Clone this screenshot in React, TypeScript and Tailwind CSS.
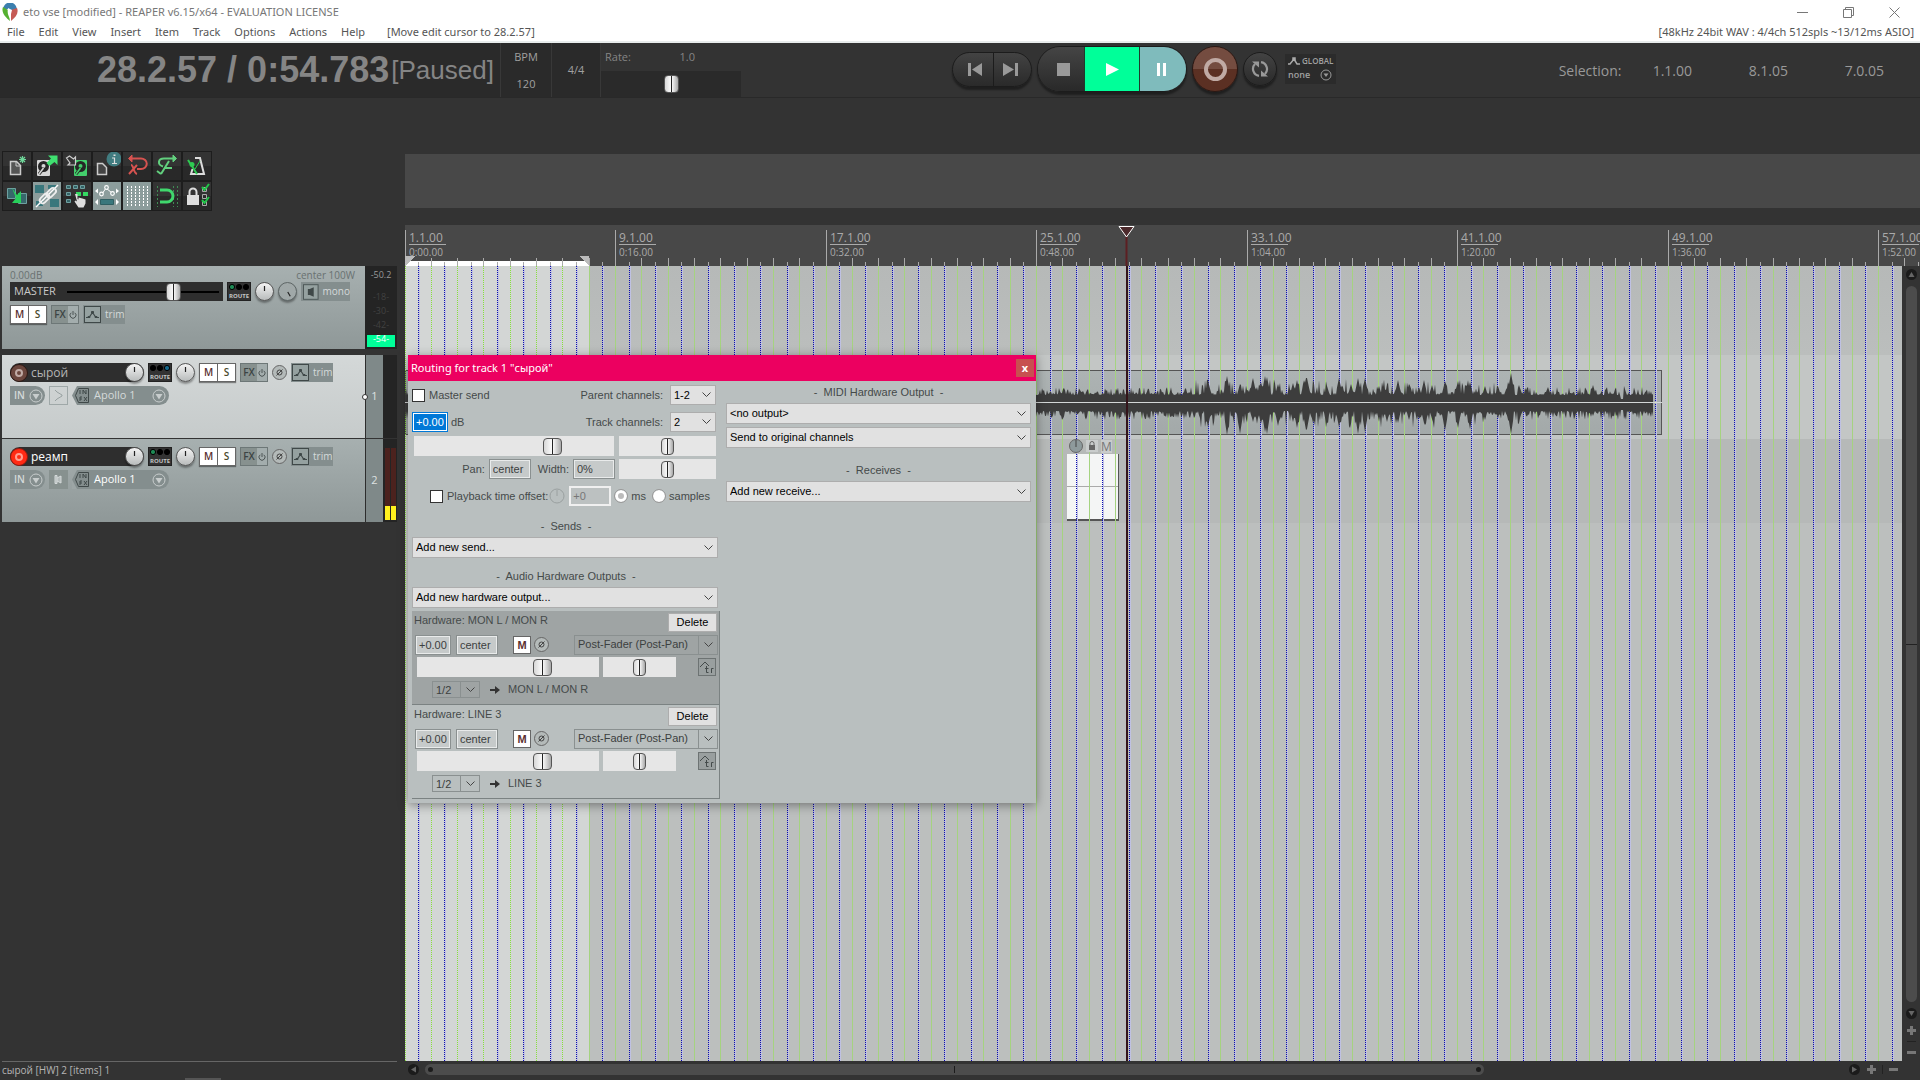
import React, { useMemo } from 'react';

const MENU = ['File', 'Edit', 'View', 'Insert', 'Item', 'Track', 'Options', 'Actions', 'Help'];

const MEASURES = [
  { bar: '1.1.00', time: '0:00.00' },
  { bar: '9.1.00', time: '0:16.00' },
  { bar: '17.1.00', time: '0:32.00' },
  { bar: '25.1.00', time: '0:48.00' },
  { bar: '33.1.00', time: '1:04.00' },
  { bar: '41.1.00', time: '1:20.00' },
  { bar: '49.1.00', time: '1:36.00' },
  { bar: '57.1.00', time: '1:52.00' },
];

const MEASURE_WIDTH = 210.5;
const BEAT_WIDTH = MEASURE_WIDTH / 8;
const BEATS = Array.from({ length: 58 }, (_, i) => i);

// loud hits in the recorded item: [x, height up, height down]
const PEAKS = [
  [803, 22, 25], [822, 26, 33], [835, 18, 32], [848, 24, 20], [856, 20, 22], [860, 26, 30], [862, 25, 32],
  [873, 18, 24], [888, 19, 20], [892, 22, 26], [901, 24, 28], [902, 24, 27], [922, 16, 20], [934, 24, 25],
  [946, 18, 16], [953, 24, 32], [960, 24, 30], [974, 16, 18], [982, 15, 20], [993, 22, 21], [1004, 18, 18],
  [1014, 15, 17], [1019, 22, 21], [1027, 17, 17], [1040, 21, 29], [1053, 21, 26], [1065, 20, 27],
  [1080, 16, 18], [1093, 16, 16], [1106, 29, 32], [1115, 14, 16], [1188, 17, 14], [1219, 16, 17],
];

const FADER_THUMB =
  'appearance-none cursor-pointer [&::-webkit-slider-thumb]:appearance-none [&::-webkit-slider-thumb]:rounded-sm [&::-webkit-slider-thumb]:border [&::-webkit-slider-thumb]:border-[#555] [&::-webkit-slider-thumb]:bg-[linear-gradient(90deg,#d8d8d8,#fafafa_45%,#222_46%,#222_54%,#f5f5f5_55%,#a8a8a8)]';
const WIDE_THUMB = '[&::-webkit-slider-thumb]:w-[19px] [&::-webkit-slider-thumb]:h-[17px]';
const THIN_THUMB = '[&::-webkit-slider-thumb]:w-[13px] [&::-webkit-slider-thumb]:h-[17px]';
const STRIP_THUMB = '[&::-webkit-slider-thumb]:w-[15px] [&::-webkit-slider-thumb]:h-[18px]';

/* ---------- toolbar icons ---------- */

const Disk = ({ color, x }: { color: string; x: number }) => (
  <g transform={`translate(${x} 8)`}>
    <rect width="13" height="16" rx="1" fill={color} />
    <circle cx="6.5" cy="6.5" r="5.5" fill="#262626" />
    <circle cx="6.5" cy="6" r="2" fill={color} />
    <path d="M7 8l-5 6" stroke="#262626" strokeWidth="3" />
    <path d="M6.500 8L2 14" stroke={color} strokeWidth="1.5" />
  </g>
);

const TOOLS = [
  {
    name: 'New project',
    art: (
      <g>
        <path d="M7.500 9.500h6l4 4v9h-10z" fill="#555" stroke="#ccc" strokeWidth="1.500" />
        <path d="M13 9.500v4.500h4.500" fill="none" stroke="#ccc" />
        <path d="M19.500 4v7M16 7.500h7M17 5l5 5M22 5l-5 5" stroke="#6fd79a" strokeWidth="1.200" />
      </g>
    ),
  },
  {
    name: 'Open project',
    art: (
      <g>
        <Disk color="#d6d6d6" x={4} />
        <path d="M15 3.500h9.500v9.500l-3-3-5 4-3-3 4.500-4.500z" fill="#3fe070" />
      </g>
    ),
  },
  {
    name: 'Save project',
    art: (
      <g>
        <Disk color="#43cf6c" x={11} />
        <path d="M3.500 6l3-2 4 3 2-2v8H5l2-2z" fill="#333" stroke="#ccc" strokeWidth="1.200" />
      </g>
    ),
  },
  {
    name: 'Project settings',
    art: (
      <g>
        <path d="M4.500 11.500h5l4 4v7h-9z" fill="#444" stroke="#ccc" strokeWidth="1.500" />
        <circle cx="21" cy="7" r="7.500" fill="#417c80" />
        <path d="M19 6h2.500v5.500M19 11.500h5" fill="none" stroke="#ddd" strokeWidth="1.200" />
        <path d="M20.500 2.500h2v1.500h-2z" fill="#ddd" />
      </g>
    ),
  },
  {
    name: 'Undo',
    art: (
      <g fill="none" stroke="#d65350" strokeWidth="2">
        <path d="M7 6.500h11a5.500 5 0 0 1 0 10.500h-4" />
        <path d="M9 3L5.500 6.500 9 10z" fill="#d65350" strokeWidth="1" />
        <path d="M6 22l8-9M8 13c3 0 2 8 6 9" />
      </g>
    ),
  },
  {
    name: 'Redo',
    art: (
      <g fill="none" stroke="#62d07e" strokeWidth="2">
        <path d="M21 6.500H11c-6 0-7 6-1 8M16 9l-8 13" />
        <path d="M20 3l3.500 3.500L20 10z" fill="#62d07e" strokeWidth="1" />
        <path d="M4 19l4 3M11 16h8" />
      </g>
    ),
  },
  {
    name: 'Metronome',
    art: (
      <g fill="none">
        <path d="M12 6h5l4 16H8l1.500-5" stroke="#ddd" strokeWidth="2" />
        <path d="M5 8l9 14" stroke="#2ecc52" strokeWidth="2" />
        <circle cx="9" cy="12.500" r="2.500" fill="#2ecc52" />
        <path d="M17 9l-5 8" stroke="#2ecc52" />
      </g>
    ),
  },
  {
    name: 'Auto-crossfade',
    art: (
      <g>
        <path d="M4.500 6.500h8v10h-8zM15.500 11.500h8v10h-8z" fill="#37686b" stroke="#6ea0a0" />
        <path d="M9 6l5 7 4-4v12h-9l4-5z" fill="#27d05a" />
      </g>
    ),
  },
  {
    name: 'Item grouping',
    active: true,
    art: (
      <g>
        <path d="M2 3h9v8H2zM17 17h9v8h-9zM15 3h8v4h-8zM3 19h7v5H3z" fill="#39777c" />
        <path d="M3 25L25 3" stroke="#fff" strokeWidth="1.500" />
        <g fill="none" stroke="#eee" strokeWidth="1.800">
          <rect x="10" y="11" width="11" height="6" rx="3" transform="rotate(-45 15 14) translate(4 0)" />
          <rect x="5" y="11" width="11" height="6" rx="3" transform="rotate(-45 14 14)" />
        </g>
      </g>
    ),
  },
  {
    name: 'Ripple editing',
    art: (
      <g>
        <path
          d="M3.500 3.500h4v3h-4zM10.500 3.500h4v3h-4zM17.500 3.500h4v3h-4zM3.500 10.500h4v3h-4zM3.500 17.500h4v3h-4z"
          fill="#356468"
          stroke="#6ea0a0"
        />
        <path d="M13 10h5v4h-5zM20 10h5v4h-5z" fill="#35d862" />
        <path d="M12 12h2.500v5l1 .5v-2l2 .5 2 .5 3 1v4l-2 4h-5l-4-6 1-1 1.500 1z" fill="#ddd" />
      </g>
    ),
  },
  {
    name: 'Move envelope points with items',
    active: true,
    art: (
      <g>
        <path d="M9 12l4-6 6 5" fill="none" stroke="#fff" />
        <g fill="#8c9d9c" stroke="#fff" strokeWidth="1.200">
          <circle cx="8.500" cy="12" r="1.800" />
          <circle cx="13.500" cy="5.500" r="1.800" />
          <circle cx="19.500" cy="11.500" r="1.800" />
        </g>
        <path d="M5 6.500v5L2 9zM23 6.500v5l3-2.500zM5 17v6l-3-3zM23 17v6l3-3z" fill="#fff" />
        <path d="M7.500 17.500h13v5h-13z" fill="#39777c" stroke="#2f5f62" />
      </g>
    ),
  },
  {
    name: 'Grid lines',
    active: true,
    art: <path d="M4.500 4v21M8.500 4v21M12.500 4v21M16.500 4v21M20.500 4v21M24.500 4v21" stroke="#fff" strokeDasharray="2 1" />,
  },
  {
    name: 'Snap to grid',
    art: (
      <g fill="none">
        <path d="M4.500 4v21M20.500 4v21M24.500 4v21" stroke="#3f8b54" strokeDasharray="2 2" />
        <path d="M7 8h7a5.500 5.500 0 0 1 0 12H7" stroke="#40d86d" strokeWidth="3" />
      </g>
    ),
  },
  {
    name: 'Locking',
    art: (
      <g fill="none">
        <path d="M4 13h12v10H4z" fill="#ddd" />
        <path d="M6.500 13v-3a3.500 3.500 0 0 1 7 0v3" stroke="#ddd" strokeWidth="2" />
        <path d="M19.500 5.500h4v4h-4zM19.500 12.500h4v4h-4zM19.500 19.500h4v4h-4z" stroke="#aaa" />
        <path d="M19 5l2.500 3L26 2M19 18l2.500 3 4.500-6" stroke="#21c648" strokeWidth="2" />
      </g>
    ),
  },
];

/* ---------- small shared controls ---------- */

interface SelectProps {
  label: string;
  value: string;
  className: string;
  flat?: boolean;
  id?: string;
}

const Select: React.FC<SelectProps> = ({ label, value, className, flat, id }) => (
  <div className={`relative ${className}`}>
    <select
      id={id}
      aria-label={label}
      className={`w-full h-full pl-[3px] pr-5 appearance-none border outline-none ${
        flat ? 'bg-transparent border-[#8a9090] text-[#3c4040]' : 'bg-[#e1e1e1] border-[#adadad] text-black'
      }`}
    >
      <option>{value}</option>
    </select>
    <span
      className={`absolute right-0 top-0 h-full w-5 flex items-center justify-center pointer-events-none ${
        flat ? 'border-l border-[#8a9090]' : ''
      }`}
    >
      <svg width="9" height="6" viewBox="0 0 9 6" fill="none" stroke="#444">
        <path d="M.5 .5l4 4 4-4" />
      </svg>
    </span>
  </div>
);

interface SliderProps {
  label: string;
  value: number;
  className: string;
}

const Slider: React.FC<SliderProps> = ({ label, value, className }) => (
  <input type="range" aria-label={label} min={0} max={1000} defaultValue={value} className={`${FADER_THUMB} ${className}`} />
);

const Knob = ({ angle = 0, dim = false, label }: { angle?: number; dim?: boolean; label: string }) => (
  <button
    aria-label={label}
    className={`size-[19px] shrink-0 rounded-full border shadow-[0_2px_2px_rgba(0,0,0,0.35)] ${
      dim ? 'bg-[#a0a8a8] border-[#5e6666]' : 'bg-linear-to-b from-[#f4f4f4] to-[#b9bcbc] border-[#555]'
    }`}
  >
    <svg viewBox="0 0 17 17" className="block size-[17px]">
      <path d="M8.500 3v5" stroke="#222" strokeWidth="1.200" transform={`rotate(${angle} 8.500 8.500)`} />
    </svg>
  </button>
);

const Route = ({ lights }: { lights: string[] }) => (
  <button className="w-6 h-[19px] shrink-0 bg-[#333] border border-[#222] flex flex-col items-center justify-between text-[6px] leading-[8px] font-bold text-[#c4c4c4]">
    <svg viewBox="0 0 22 8" className="block w-[22px] h-2">
      {lights.map((color, i) => (
        <circle key={i} cx={4 + i * 7} cy="4" r="2.600" fill={color} stroke="#000" />
      ))}
    </svg>
    ROUTE
  </button>
);

const MuteSolo = () => (
  <div className="flex shrink-0 h-[19px] w-[37px] border border-[#666] bg-white text-[10px] leading-[17px] font-semibold text-[#3a3a3a] shadow-[0_1px_1px_rgba(0,0,0,0.4)]">
    <button className="flex-1 border-r border-[#666] text-[#5a3030]">M</button>
    <button className="flex-1 text-[#4a4a2c]">S</button>
  </div>
);

const Fx = () => (
  <div className="flex shrink-0 h-[19px] w-7 border border-[#6d7777] text-[10px] leading-[17px] font-semibold text-[#3c4444]">
    <button className="w-4 bg-[#87918f]">FX</button>
    <button aria-label="Bypass effects" className="flex-1 bg-[#a3adad] flex items-center justify-center">
      <svg width="8" height="8" viewBox="0 0 8 8" fill="none" stroke="#4c5454">
        <path d="M2.200 1.800a3 3 0 1 0 3.600 0M4 0v4" />
      </svg>
    </button>
  </div>
);

const Trim = () => (
  <button className="flex shrink-0 h-[19px] w-[42px] items-center bg-[#848e8e] pl-px text-[10px] text-[#d5dada]">
    <svg width="17" height="17" viewBox="0 0 17 17" fill="none" stroke="#3f4848" className="mr-1">
      <rect x=".5" y=".5" width="16" height="16" fill="#95a1a0" />
      <path d="M2 11.500h3l3.500-5 3.500 5h3" strokeWidth="1.200" />
      <path d="M7.500 5.500h2v1.500h-2zM4 10.500h2v1H4zM11 10.500h2v1h-2z" fill="#3f4848" />
    </svg>
    trim
  </button>
);

const Phase = () => (
  <button aria-label="Invert phase" className="size-[15px] shrink-0 rounded-full border border-[#666] bg-[#b4bab9]">
    <svg viewBox="0 0 13 13" className="block size-[13px]" fill="none" stroke="#444">
      <circle cx="6.500" cy="6.500" r="2.500" />
      <path d="M3.500 9.500l6-6" />
    </svg>
  </button>
);

const DropArrow = () => (
  <svg width="14" height="14" viewBox="0 0 14 14" className="shrink-0">
    <circle cx="7" cy="7" r="6" fill="none" stroke="#c8cdcd" />
    <path d="M3.500 5h7L7 10.500z" fill="#c8cdcd" />
  </svg>
);

/* ---------- header ---------- */

const TitleBar = () => (
  <header className="bg-white border-b-2 border-[#e8ecec] h-[43px] shrink-0 flex flex-col text-[11px] font-['Noto_Sans',sans-serif]">
    <div className="h-6 flex items-center text-[#777]">
      <svg width="16" height="18" viewBox="0 0 16 18" className="ml-0.5 mr-[5px]">
        <path d="M1 7a7 7 0 0 1 14-1L10 9 7 6z" fill="#3c7fae" />
        <path d="M1 4l5 3 2 11C3 14 -1 9 1 4z" fill="#55b030" />
        <path d="M9 7l6-2c2 5-1 9-6 13z" fill="#c65a55" />
        <path d="M6 5l4 2-2 8c-2-2-3-6-2-10z" fill="#fff" />
      </svg>
      eto vse [modified] - REAPER v6.15/x64 - EVALUATION LICENSE
      <div className="ml-auto flex items-center gap-[35px] pr-5 text-[#777]">
        <button aria-label="Minimize">
          <svg width="11" height="11" viewBox="0 0 11 11" stroke="currentColor">
            <path d="M0 5.500h11" />
          </svg>
        </button>
        <button aria-label="Restore">
          <svg width="11" height="11" viewBox="0 0 11 11" fill="none" stroke="currentColor">
            <path d="M.5 2.500h8v8h-8zM2.500 2.500v-2h8v8h-2" />
          </svg>
        </button>
        <button aria-label="Close">
          <svg width="11" height="11" viewBox="0 0 11 11" stroke="currentColor">
            <path d="M.5 .5l10 10M10.500 .5l-10 10" />
          </svg>
        </button>
      </div>
    </div>
    <nav className="h-[17px] flex items-center pl-[7px] gap-[14px] text-[#555]">
      {MENU.map(item => (
        <button key={item}>{item}</button>
      ))}
      <span className="ml-2">[Move edit cursor to 28.2.57]</span>
      <span className="ml-auto pr-1.5">[48kHz 24bit WAV : 4/4ch 512spls ~13/12ms ASIO]</span>
    </nav>
  </header>
);

const Transport = () => (
  <section className="h-[55px] shrink-0 flex border-b border-[#292929] text-[11px] text-[#a0a0a0]">
    <div className="w-[500px] pl-[97px] bg-[#2a2a2a] flex items-center text-[#858585] font-['Liberation_Sans',sans-serif] whitespace-nowrap">
      <span className="text-[36px] font-bold">28.2.57 / 0:54.783</span>
      <span className="text-[26px] pl-0.5">[Paused]</span>
    </div>
    <div className="w-[51px] bg-[#2a2a2a] border-l border-[#383838] flex flex-col items-center justify-between pt-1.5 pb-[5px]">
      <span>BPM</span>
      <span>120</span>
    </div>
    <div className="w-[49px] bg-[#2a2a2a] border-l border-[#383838] flex items-center justify-center">4/4</div>
    <div className="w-[141px] flex flex-col justify-between border-l border-[#383838]">
      <div className="flex justify-between pl-1 pr-[46px] pt-1.5 text-[#858585]">
        <label htmlFor="rate">Rate:</label>
        <span>1.0</span>
      </div>
      <input
        id="rate"
        type="range"
        defaultValue={50}
        className={`w-full h-[26px] bg-[#2a2a2a] ${FADER_THUMB} ${STRIP_THUMB}`}
      />
    </div>

    <div className="ml-[211px] flex items-center pb-1.5">
      <div className="flex h-[35px] w-20 mt-1 rounded-full border border-[#1c1c1c] bg-linear-to-b from-[#434343] to-[#2a2a2a] shadow-[0_3px_2px_rgba(0,0,0,0.4)]">
        <button aria-label="Go to start" className="flex-1 flex items-center justify-center border-r border-[#1c1c1c] pl-1.5">
          <svg width="15" height="13" viewBox="0 0 15 13" fill="#999">
            <path d="M0 0h3v13H0zM14 0v13L4 6.500z" />
          </svg>
        </button>
        <button aria-label="Go to end" className="flex-1 flex items-center justify-center pr-1">
          <svg width="15" height="13" viewBox="0 0 15 13" fill="#999">
            <path d="M12 0h3v13h-3zM0 0v13l11-6.500z" />
          </svg>
        </button>
      </div>
      <div className="ml-[5px] mt-1 flex h-[46px] w-[150px] rounded-full border border-[#1c1c1c] overflow-hidden shadow-[0_3px_2px_rgba(0,0,0,0.4)]">
        <button aria-label="Stop" className="w-[46px] bg-linear-to-b from-[#454545] to-[#292929] flex items-center justify-center pl-1">
          <span className="size-[13px] bg-[#999]" />
        </button>
        <button aria-label="Play" className="w-[56px] bg-[#00ff99] border-x border-[#1c3c2c] flex items-center justify-center">
          <svg width="13" height="13" viewBox="0 0 13 13" fill="#fff">
            <path d="M0 0v13l13-6.500z" />
          </svg>
        </button>
        <button aria-label="Pause" className="flex-1 bg-[#7fbbbc] flex items-center justify-center gap-[3px] pr-1">
          <span className="w-[3px] h-[13px] bg-white" />
          <span className="w-[3px] h-[13px] bg-white" />
        </button>
      </div>
      <button
        aria-label="Record"
        className="ml-[5px] mt-1 size-[46px] rounded-full border border-[#2b1712] bg-linear-to-b from-[#744c40] from-50% to-[#5b3023] to-50% flex items-center justify-center shadow-[0_3px_2px_rgba(0,0,0,0.4)]"
      >
        <span className="size-[23px] rounded-full border-4 border-[#c0aaa4]" />
      </button>
      <button
        aria-label="Repeat"
        className="ml-[5px] mt-1 size-[34px] rounded-full border border-[#1c1c1c] bg-linear-to-b from-[#434343] to-[#2a2a2a] flex items-center justify-center shadow-[0_3px_2px_rgba(0,0,0,0.4)]"
      >
        <svg width="18" height="18" viewBox="0 0 18 18" fill="none" stroke="#999" strokeWidth="2.200">
          <path d="M8 15.800A7 7 0 0 1 4 4M10 2.200A7 7 0 0 1 14 14" />
          <path d="M1 1.500h7v6zM17 16.500h-7v-6z" fill="#999" stroke="none" />
        </svg>
      </button>
      <div className="ml-2 mt-1 w-[51px] h-[30px] bg-[#2b2b2b] text-[9px] leading-[14px] font-semibold pl-[3px]">
        <button className="flex items-center gap-0.5">
          <svg width="12" height="8" viewBox="0 0 12 8" fill="none" stroke="#aaa" strokeWidth="1.500">
            <path d="M0 7h2l4-5 3 5h3" />
            <path d="M5 1h2v2H5z" fill="#aaa" />
          </svg>
          <span className="text-[8px]">GLOBAL</span>
        </button>
        <button className="flex items-center justify-between w-11">
          none
          <svg width="12" height="12" viewBox="0 0 12 12">
            <circle cx="6" cy="6" r="5" fill="none" stroke="#999" />
            <path d="M3.500 4.500h5L6 8z" fill="#999" />
          </svg>
        </button>
      </div>
    </div>

    <div className="ml-auto mr-9 flex items-center text-[14px] text-[#999]">
      <span className="w-[94px]">Selection:</span>
      <span className="w-24">1.1.00</span>
      <span className="w-24">8.1.05</span>
      <span>7.0.05</span>
    </div>
  </section>
);

/* ---------- track control panel ---------- */

const Toolbar = () => (
  <div className="ml-0.5 w-[210px] grid grid-cols-7">
    {TOOLS.map(tool => (
      <button
        key={tool.name}
        title={tool.name}
        className={`h-[30px] border border-[#1d1d1d] ${tool.active ? 'bg-[#8c9d9c]' : 'bg-linear-to-b from-[#333] from-50% to-[#292929] to-50%'}`}
      >
        <svg viewBox="0 0 28 28" className="block size-7">
          {tool.art}
        </svg>
      </button>
    ))}
  </div>
);

const MasterTrack = () => (
  <div className="ml-0.5 mr-2 h-[83px] flex">
    <div className="flex-1 bg-linear-to-b from-[#a7b0b0] to-[#8f9898] pl-2 pt-0.5">
      <div className="flex justify-between pr-2.5 text-[10px] leading-[14px] text-[#697171]">
        <span>0.00dB</span>
        <span>center 100W</span>
      </div>
      <div className="flex gap-1">
        <div className="w-[213px] h-[19px] bg-[#2e2e2e] pl-1 pr-1 flex items-center text-[11px] text-[#c9c9c9]">
          <span className="w-[53px]">MASTER</span>
          <Slider
            label="Master volume"
            value={723}
            className={`w-[152px] h-[18px] bg-[linear-gradient(transparent_8px,#000_8px,#000_10px,transparent_10px)] ${STRIP_THUMB}`}
          />
        </div>
        <Route lights={['#1e8a55', '#000', '#000']} />
        <Knob label="Pan" />
        <Knob label="Width" angle={150} dim />
        <button className="w-[49px] h-[19px] bg-[#848e8e] flex items-center pl-0.5 text-[10px] text-[#d5dada]">
          <svg width="16" height="16" viewBox="0 0 16 16" className="mr-1">
            <rect x=".5" y=".5" width="15" height="15" fill="#95a1a0" stroke="#4c5656" />
            <path d="M5 5h2l4-2v10l-4-2H5z" fill="#3f4848" />
          </svg>
          mono
        </button>
      </div>
      <div className="flex gap-1 mt-1">
        <MuteSolo />
        <Fx />
        <Trim />
      </div>
    </div>
    <div className="w-8 bg-[#242424] flex flex-col items-center text-[9px] leading-[14px] text-[#414141]">
      <span className="text-[#999] pt-0.5">-50.2</span>
      <span className="mt-2">-18-</span>
      <span>-30-</span>
      <span>-42-</span>
      <div className="mt-auto mb-0.5 w-7 h-3 bg-[#00ff99] text-white text-center leading-[7px]">-54-</div>
    </div>
  </div>
);

interface TrackProps {
  number: number;
  name: string;
  armed?: boolean;
  selected?: boolean;
  lights: string[];
}

const TrackPanel: React.FC<TrackProps> = ({ number, name, armed, selected, lights }) => (
  <div className="ml-0.5 mr-2 h-[83px] flex">
    <div
      className={`relative flex-1 pl-2 pt-2 bg-linear-to-b ${selected ? 'from-[#d4d8d8] to-[#c6cbcb]' : 'from-[#a7b0b0] to-[#8f9898]'}`}
    >
      <div className="flex items-center gap-1">
        <div className="w-[134px] h-[19px] bg-[#2e2e2e] rounded-full flex items-center">
          <button
            aria-label="Record arm"
            className={`size-[18px] rounded-full border flex items-center justify-center ${armed ? 'bg-[#ff2a14] border-[#8f1a10]' : 'bg-[#6b463d] border-[#2b1712]'}`}
          >
            <span className={`size-2 rounded-full border-2 ${armed ? 'border-[#ff9d90]' : 'border-[#c0aaa4]'}`} />
          </button>
          <span className={`ml-[3px] flex-1 text-[12px] ${armed ? 'text-white' : 'text-[#b5b5b5]'}`}>{name}</span>
          <Knob label="Volume" />
        </div>
        <Route lights={lights} />
        <Knob label="Pan" />
        <MuteSolo />
        <Fx />
        <Phase />
        <Trim />
      </div>
      <div className="flex items-center mt-1 text-[11px] text-[#d5dada]">
        <button className="w-[35px] h-[19px] rounded-r-full bg-[#848e8e] flex items-center justify-between pl-1 pr-0.5 text-[10px] font-semibold">
          IN <DropArrow />
        </button>
        <button
          aria-label="Record monitoring"
          className={`ml-1 w-[19px] h-[19px] flex items-center justify-center ${armed ? 'bg-[#87918f]' : 'border border-[#9fa8a8]'}`}
        >
          <svg width="13" height="13" viewBox="0 0 13 13" fill="none" stroke={armed ? '#d5dada' : '#98a1a1'}>
            {armed ? <path d="M3 2.500h2v8H3zM5 5l4-2v7L5 8" fill="#b5bcbc" /> : <path d="M3 1l2 2 5 3v1l-5 3-2 2" />}
          </svg>
        </button>
        <button className="ml-1 w-[97px] h-[19px] rounded-r-full bg-[#848e8e] flex items-center pr-0.5">
          <svg width="18" height="19" viewBox="0 0 18 19" fill="none" stroke="#3f4848">
            <path d="M0 0h5L0 9.500zM0 19h5L0 9.500z" fill={selected ? '#ced2d2' : '#9da6a6'} stroke="none" />
            <path d="M6.500 2.500h10v14h-10l-3-7z" />
            <path d="M8 4v4M11 8V4l3 4V4" />
            <path d="M8 15v-4h2M8 13h2M12 11l3 4M15 11l-3 4" />
          </svg>
          <span className={`ml-1 flex-1 text-left ${armed ? 'text-white' : ''}`}>Apollo 1</span>
          <span className="mr-px">
            <DropArrow />
          </span>
        </button>
      </div>
      {selected && <span className="absolute -right-[3px] top-[39px] size-[6px] rounded-full border border-[#333] bg-white" />}
    </div>
    <div className="w-[18px] bg-[#7f8989] border-l border-[#2d2d2d] flex items-center justify-center text-[11px] text-[#dde1e1]">
      {number}
    </div>
    <div className="w-[14px] bg-[#242424] flex items-end justify-center gap-px">
      {armed &&
        [0, 1].map(channel => (
          <div key={channel} className="w-[5px] h-[72px] mb-0.5 bg-[#4c221e] flex items-end">
            <div className="w-full h-[14px] bg-[#fff01e]" />
          </div>
        ))}
    </div>
  </div>
);

const Sidebar = () => (
  <aside className="w-[405px] shrink-0 flex flex-col pt-[53px] bg-[#333]">
    <Toolbar />
    <div className="mt-[55px]">
      <MasterTrack />
    </div>
    <div className="mt-1.5 flex flex-col gap-px">
      <TrackPanel number={1} name="сырой" selected lights={['#000', '#000', '#15678a']} />
      <TrackPanel number={2} name="реамп" armed lights={['#1e8a55', '#000', '#000']} />
    </div>
    <footer className="mt-auto ml-0.5 mr-2 h-[19px] border-t border-[#666] text-[10px] leading-4 text-[#b5b5b5]">
      сырой [HW] 2 [items] 1
      <div className="ml-[183px] w-9 h-0.5 bg-[#555]" />
    </footer>
  </aside>
);

/* ---------- arrange view ---------- */

const Ruler = () => (
  <div className="relative h-[41px] shrink-0 bg-[#484848] overflow-hidden text-[#aaa]">
    <div className="absolute left-0 bottom-0 w-[184px] h-[5px] bg-white" />
    <svg className="absolute inset-0 size-full" shapeRendering="crispEdges">
      {BEATS.map(i => {
        const x = Math.floor(i * BEAT_WIDTH);
        return (
          <g key={i} fill="#aaa">
            <rect x={x} y={i % 8 === 0 ? 5 : 33} width="1" height="36" />
            <rect x={Math.round((i + 0.5) * BEAT_WIDTH)} y="37" width="1" height="4" />
          </g>
        );
      })}
      <path d="M0 31h10L0 41zM184 31h-10l10 10z" fill="#bbb" />
    </svg>
    {MEASURES.map((m, i) => (
      <div key={m.bar} className="absolute top-1.5 ml-1" style={{ left: Math.floor(i * MEASURE_WIDTH) }}>
        <div className="w-[37px] border-b border-[#aaa] text-[12px] leading-[13px]">{m.bar}</div>
        <div className="text-[10px] leading-[14px]">{m.time}</div>
      </div>
    ))}
    <svg className="absolute left-[713px] top-px" width="17" height="40" viewBox="0 0 17 40">
      <path d="M8.500 10v30" stroke="#5c1f22" strokeWidth="2" />
      <path d="M1 .5h15L8.500 11z" fill="#4c2a2c" stroke="#fff" />
    </svg>
  </div>
);

const Waveform = () => {
  const path = useMemo(() => {
    const noise = (n: number) => Math.abs(Math.sin(n * 12.9898) * 43758.5453) % 1;
    const top: string[] = [];
    const bottom: string[] = [];
    for (let x = 0; x <= 1248; x++) {
      const loud = x > 790 && x < 1120 ? 8 : 0;
      const up1 = noise(x);
      const down1 = noise(x + 999);
      let up = 7 + up1 * up1 * 8 + up1 ** 5 * loud;
      let down = 9 + down1 * down1 * 9 + down1 ** 5 * loud;
      PEAKS.forEach(([px, pu, pd]) => {
        const d = Math.abs(px - x);
        if (d < 3) {
          up = Math.max(up, pu * (1 - d / 5));
          down = Math.max(down, pd * (1 - d / 5));
        }
      });
      if (Math.abs(x - 1217) < 2) {
        up = 3;
        down = 8;
      }
      top.push(`${x} ${(32 - up).toFixed(1)}`);
      bottom.unshift(`${x} ${(32 + down).toFixed(1)}`);
    }
    return `M${top.join('L')}L${bottom.join('L')}Z`;
  }, []);

  return (
    <svg className="absolute left-0 top-[104px] w-[1257px] h-[65px]">
      <path d={path} fill="#3d3d3d" />
      <path d="M0 32.500h1257" stroke="#d3d7d7" />
    </svg>
  );
};

const GridLines = () => (
  <svg className="absolute inset-0 size-full" shapeRendering="crispEdges">
    {BEATS.map(i => {
      const green = Math.floor(i * BEAT_WIDTH);
      const blue = Math.round((i + 0.5) * BEAT_WIDTH);
      return (
        <g key={i}>
          {green < 184 ? (
            <path d={`M${green + 0.5} 0V1200`} stroke="#86e03c" strokeDasharray="1 1" />
          ) : (
            <path d={`M${green + 0.5} 0V1200`} stroke="#a5d380" />
          )}
          <path d={`M${blue + 1.5} 0V1200`} stroke="#bfc1e2" />
          <path d={`M${blue + 0.5} 0V1200`} stroke="#0a0ab4" strokeDasharray="1 1" />
        </g>
      );
    })}
  </svg>
);

const Arrange = () => (
  <div className="relative flex-1 overflow-hidden bg-[#bcbfbe]">
    <div className="h-[89px] bg-linear-to-b from-[#b6b9b8] to-[#bbbebd]" />
    <div className="h-[84px] bg-[#c3c6c5]" />
    <div className="h-[84px] bg-[#b6b9b8]" />
    <div className="absolute left-0 top-0 w-[184px] h-full bg-[#d3d6d5]" />
    <div className="absolute left-0 top-[104px] w-[1257px] h-[65px] bg-linear-to-b from-[#adb3b3] to-[#a3a9a9] border border-[#555]" />
    <div className="absolute left-[662px] top-[188px] w-[52px] h-[67px] bg-[#f4f5f5] border-r border-b-2 border-[#555]">
      <div className="mt-8 h-px bg-[#aaa]" />
    </div>
    <GridLines />
    <Waveform />
    <div className="absolute left-[664px] top-[173px] flex items-center gap-[3px] text-[12px] leading-[13px] text-[#777]">
      <svg width="14" height="14" viewBox="0 0 14 14">
        <circle cx="7" cy="7" r="6.500" fill="#8e9a9c" stroke="#666" />
        <path d="M7 1v7" stroke="#444" />
      </svg>
      <svg width="12" height="12" viewBox="0 0 12 12">
        <rect width="12" height="12" fill="#c9cccc" />
        <path d="M3 5h6v5H3z" fill="#666" />
        <path d="M4 5V3.500a2 2 0 0 1 4 0V5" fill="none" stroke="#666" />
      </svg>
      <span className="bg-[#c9cccc]">M</span>
    </div>
    <div className="absolute left-[721px] top-0 w-0.5 h-full bg-[#33141a]" />
  </div>
);

const ScrollButton = ({ rotate, label }: { rotate: number; label: string }) => (
  <button aria-label={label} className="size-[11px] shrink-0 rounded-full bg-[#1b1b1b] flex items-center justify-center">
    <svg width="7" height="7" viewBox="0 0 7 7">
      <path d="M3.500 1l3 5h-6z" fill="#666" transform={`rotate(${rotate} 3.500 3.500)`} />
    </svg>
  </button>
);

const ZoomGlyph = ({ plus }: { plus?: boolean }) => (
  <button aria-label={plus ? 'Zoom in' : 'Zoom out'} className="shrink-0">
    <svg width="9" height="9" viewBox="0 0 9 9" className="block">
      <path d={plus ? 'M3 0h3v3h3v3H6v3H3V6H0V3h3z' : 'M0 3h9v3H0z'} fill="#777" />
    </svg>
  </button>
);

const ArrangePane = () => (
  <main className="flex-1 min-w-0 flex flex-col">
    <div className="mt-14 h-[54px] shrink-0 bg-[#484848]" />
    <div className="mt-[17px] shrink-0">
      <Ruler />
    </div>
    <div className="flex-1 min-h-0 flex">
      <Arrange />
      <div className="w-[18px] flex flex-col items-center pt-[3px] pb-1">
        <ScrollButton label="Scroll up" rotate={0} />
        <div className="mt-1.5 mb-1.5 w-[11px] flex-1 rounded-full bg-[#4c4c4c] flex items-center">
          <span className="w-full h-px bg-[#222]" />
        </div>
        <ScrollButton label="Scroll down" rotate={180} />
        <div className="mt-[7px] flex flex-col items-center gap-1.5">
          <ZoomGlyph plus />
          <span className="w-[9px] h-px bg-[#222]" />
          <ZoomGlyph />
        </div>
      </div>
    </div>
    <div className="h-[19px] shrink-0 flex items-center pl-[3px] pr-[22px] pb-[3px]">
      <ScrollButton label="Scroll left" rotate={270} />
      <div className="flex-1 ml-1.5 mr-3">
        <div className="w-3/4 h-[11px] rounded-full bg-[#4c4c4c] flex items-center justify-between px-[3px]">
          <span className="size-[5px] rounded-full bg-[#1b1b1b]" />
          <span className="w-px h-[7px] bg-[#1b1b1b]" />
          <span className="size-[5px] rounded-full bg-[#1b1b1b]" />
        </div>
      </div>
      <ScrollButton label="Scroll right" rotate={90} />
      <div className="ml-[7px] flex items-center gap-1.5">
        <ZoomGlyph plus />
        <span className="w-px h-[9px] bg-[#222]" />
        <ZoomGlyph />
      </div>
    </div>
  </main>
);

/* ---------- routing window ---------- */

const FIELD = 'bg-[#c6caca] border-2 border-[#e9ebeb] outline outline-[#8a9090] -outline-offset-1 px-0.5 text-[#3c4040]';

const HardwareOutput = ({ name, active }: { name: string; active?: boolean }) => (
  <section className={`h-[94px] pt-0.5 border-b border-r border-[#7b8282] ${active ? 'bg-[#9fa4a4]' : ''}`}>
    <div className="h-[19px] flex justify-between pl-0.5 pr-0.5">
      <span className="leading-[15px]">Hardware: {name}</span>
      <button className="w-[49px] h-[19px] bg-[#e1e1e1] border border-[#adadad] text-black">Delete</button>
    </div>
    <div className="mt-0.5 h-[21px] flex items-center pl-[3px] pr-px">
      <input aria-label={`${name} volume`} defaultValue="+0.00" className={`w-9 h-5 ${FIELD}`} />
      <input aria-label={`${name} pan`} defaultValue="center" className={`ml-[5px] w-[42px] h-5 ${FIELD}`} />
      <button className="ml-[15px] w-[18px] h-[18px] bg-white border border-[#666] text-[#5a3030] leading-4 font-bold">M</button>
      <span className="ml-[3px] flex">
        <Phase />
      </span>
      <Select label={`${name} send mode`} value="Post-Fader (Post-Pan)" flat className="ml-auto w-[144px] h-5" />
    </div>
    <div className="mt-0.5 h-5 flex items-center pl-[5px] pr-[3px]">
      <Slider label={`${name} volume fader`} value={712} className={`w-[182px] h-5 bg-[#e6e6e6] ${WIDE_THUMB}`} />
      <Slider label={`${name} pan fader`} value={500} className={`ml-1 w-[73px] h-5 bg-[#e6e6e6] ${THIN_THUMB}`} />
      <button aria-label="Envelopes" className="ml-auto w-[18px] h-[18px] border border-[#6d7373] bg-[#999f9f]">
        <svg viewBox="0 0 16 16" className="block size-4" fill="none" stroke="#444b4b">
          <path d="M1 8l5-5 4 4" />
          <path d="M7.500 7v6.500h2M6 9.500h3.500M12.500 14V9.500h2" />
        </svg>
      </button>
    </div>
    <div className="mt-1 h-[17px] flex items-center pl-5">
      <Select label={`${name} source channels`} value="1/2" flat className="w-12 h-[17px]" />
      <svg width="10" height="8" viewBox="0 0 10 8" className="ml-2.5 mr-2">
        <path d="M0 3h5V0l5 4-5 4V5H0z" fill="#333" />
      </svg>
      {name}
    </div>
  </section>
);

const RoutingDialog = () => (
  <div
    role="dialog"
    aria-label="Routing for track 1"
    className="absolute left-[408px] top-[355px] w-[628px] h-[448px] flex flex-col bg-[#b9bfbf] shadow-[0_2px_10px_rgba(0,0,0,0.4)] font-['Liberation_Sans',sans-serif] text-[11px] text-[#454a4a]"
  >
    <div className="h-[26px] shrink-0 bg-[#ec0060] flex items-center justify-between pl-[3px] pr-0.5 text-white font-['Noto_Sans',sans-serif]">
      Routing for track 1 "сырой"
      <button className="w-[18px] h-[18px] bg-[#c75050] text-[11px] leading-4 font-bold">x</button>
    </div>
    <div className="flex pl-1 pr-[5px] gap-1.5">
      <div className="w-[308px] pt-1">
        <div className="h-5 flex items-center pr-1">
          <label className="flex items-center gap-1">
            <input type="checkbox" className="size-[13px] appearance-none bg-white border border-[#333]" />
            Master send
          </label>
          <label htmlFor="parent-channels" className="ml-auto mr-[7px]">
            Parent channels:
          </label>
          <Select id="parent-channels" label="Parent channels" value="1-2" className="w-[46px] h-5" />
        </div>
        <div className="mt-[7px] h-5 flex items-center pr-1">
          <input
            id="send-volume"
            defaultValue="+0.00"
            className="w-9 h-5 px-0.5 border-2 border-[#0078d7] bg-[#0078d7] text-white outline outline-white -outline-offset-2"
          />
          <label htmlFor="send-volume" className="ml-[3px]">
            dB
          </label>
          <label htmlFor="track-channels" className="ml-auto mr-[7px]">
            Track channels:
          </label>
          <Select id="track-channels" label="Track channels" value="2" className="w-[46px] h-5" />
        </div>
        <div className="mt-1 h-5 flex justify-between pl-0.5 pr-1">
          <Slider label="Volume" value={713} className={`w-[200px] h-5 bg-[#e6e6e6] ${WIDE_THUMB}`} />
          <Slider label="Pan" value={500} className={`w-[97px] h-5 bg-[#e6e6e6] ${THIN_THUMB}`} />
        </div>
        <div className="mt-[3px] h-5 flex items-center justify-end pr-1">
          <label htmlFor="pan">Pan:</label>
          <input id="pan" defaultValue="center" className={`ml-1 w-[42px] h-5 ${FIELD}`} />
          <label htmlFor="width" className="ml-[7px]">
            Width:
          </label>
          <input id="width" defaultValue="0%" className={`ml-1 w-[42px] h-5 ${FIELD}`} />
          <Slider label="Width fader" value={500} className={`ml-1 w-[97px] h-5 bg-[#e6e6e6] ${THIN_THUMB}`} />
        </div>
        <div className="mt-[7px] h-5 flex items-center pl-[18px] whitespace-nowrap">
          <label className="flex items-center gap-1">
            <input type="checkbox" className="size-[13px] appearance-none bg-white border border-[#333]" />
            Playback time offset:
          </label>
          <svg width="16" height="16" viewBox="0 0 16 16" fill="none" stroke="#9aa0a0" className="ml-auto shrink-0">
            <circle cx="8" cy="8" r="7" />
            <path d="M8 2v6" />
          </svg>
          <input aria-label="Playback offset" defaultValue="+0" className="ml-1 w-[42px] h-5 px-0.5 border-2 border-[#f0f0f0] bg-[#bcc1c1] text-[#777]" />
          <label className="ml-1 flex items-center gap-1">
            <input
              type="radio"
              name="offset-unit"
              defaultChecked
              className="size-3 appearance-none rounded-full bg-white border-[3px] border-white checked:bg-[#bbb] outline outline-[#999]"
            />
            ms
          </label>
          <label className="ml-[7px] mr-2.5 flex items-center gap-1">
            <input type="radio" name="offset-unit" className="size-3 appearance-none rounded-full bg-white outline outline-[#999]" />
            samples
          </label>
        </div>

        <h3 className="mt-[11px] h-[18px] leading-[18px] text-center whitespace-pre">-  Sends  -</h3>
        <Select label="Add send" value="Add new send..." className="mt-0.5 mr-0.5 h-[21px]" />
        <h3 className="mt-[9px] h-[18px] leading-[18px] text-center whitespace-pre">-  Audio Hardware Outputs  -</h3>
        <Select label="Add hardware output" value="Add new hardware output..." className="mt-0.5 mr-0.5 h-[21px]" />
        <div className="mt-[3px]">
          <HardwareOutput name="MON L / MON R" active />
          <HardwareOutput name="LINE 3" />
        </div>
      </div>

      <div className="flex-1 pt-0.5">
        <h3 className="h-[18px] leading-[18px] text-center whitespace-pre">-  MIDI Hardware Output  -</h3>
        <Select label="MIDI output" value="<no output>" className="mt-0.5 h-[21px]" />
        <Select label="MIDI channels" value="Send to original channels" className="mt-[3px] h-[21px]" />
        <h3 className="mt-[13px] h-[18px] leading-[18px] text-center whitespace-pre">-  Receives  -</h3>
        <Select label="Add receive" value="Add new receive..." className="mt-0.5 h-[21px]" />
      </div>
    </div>
  </div>
);

const App = () => (
  <div className="relative h-screen flex flex-col overflow-hidden bg-[#333] font-['Open_Sans',sans-serif]">
    <TitleBar />
    <Transport />
    <div className="flex-1 min-h-0 flex">
      <Sidebar />
      <ArrangePane />
    </div>
    <RoutingDialog />
  </div>
);

export default App;
